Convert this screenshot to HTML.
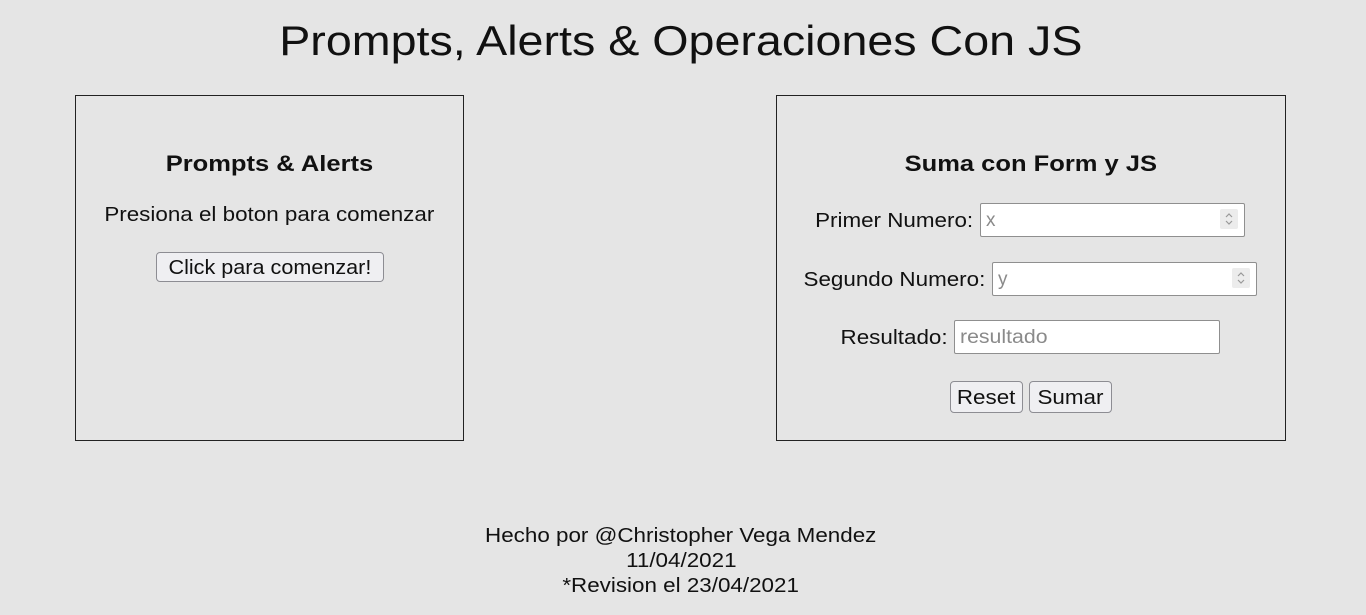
<!DOCTYPE html>
<html><head><meta charset="utf-8"><style>
body{margin:0;width:1366px;height:615px;background:#e5e5e5;font-family:"Liberation Sans",sans-serif;color:#111;position:relative;overflow:hidden}
.a{position:absolute;white-space:nowrap}
.c{text-align:center}
.s{display:inline-block;transform:scaleX(1.12);transform-origin:center}
.r .s{transform-origin:right}
.l .s{transform-origin:left}
.box{position:absolute;border:1px solid #222;box-sizing:border-box}
.btn{position:absolute;background:#efeff2;border:1px solid #8d8d93;border-radius:4px;box-sizing:border-box;font-size:19px;text-align:center;line-height:30px}
.inp{position:absolute;background:#fff;border:1px solid #8f8f8f;border-radius:2px;box-sizing:border-box;font-size:19px;color:#8a8a8a;padding-left:5px;line-height:34px}
.sp{position:absolute;right:6px;top:5px;width:18px;height:20px;background:#ececec;border-radius:2px;line-height:0}
</style></head><body>
<div class="a c" style="left:0;width:1362px;top:16px;font-size:42px;line-height:50px"><span class="s" style="transform:scaleX(1.11)">Prompts, Alerts &amp; Operaciones Con JS</span></div>

<div class="box" style="left:75px;top:95px;width:389px;height:346px"></div>
<div class="a c" style="left:75px;width:389px;top:150px;font-size:22px;font-weight:bold;line-height:28px"><span class="s" style="transform:scaleX(1.16)">Prompts &amp; Alerts</span></div>
<div class="a c" style="left:75px;width:389px;top:203px;font-size:20px;line-height:24px"><span class="s">Presiona el boton para comenzar</span></div>
<div class="btn" style="left:156px;top:252px;width:228px;height:30px;line-height:30px;font-size:20px"><span class="s" style="transform:scaleX(1.08)">Click para comenzar!</span></div>

<div class="box" style="left:776px;top:95px;width:510px;height:346px"></div>
<div class="a c" style="left:776px;width:510px;top:150px;font-size:22px;font-weight:bold;line-height:28px"><span class="s" style="transform:scaleX(1.16)">Suma con Form y JS</span></div>
<div class="a r" style="right:393px;top:209px;font-size:20px;line-height:24px"><span class="s">Primer Numero:</span></div>
<div class="inp" style="left:980px;top:203px;width:265px;height:34px">x<div class="sp"><svg width="18" height="20"><path d="M6 8l3-3 3 3M6 12l3 3 3-3" fill="none" stroke="#999" stroke-width="1.2"/></svg></div></div>
<div class="a r" style="right:381px;top:268px;font-size:20px;line-height:24px"><span class="s">Segundo Numero:</span></div>
<div class="inp" style="left:992px;top:262px;width:265px;height:34px">y<div class="sp"><svg width="18" height="20"><path d="M6 8l3-3 3 3M6 12l3 3 3-3" fill="none" stroke="#999" stroke-width="1.2"/></svg></div></div>
<div class="a r" style="right:418px;top:326px;font-size:20px;line-height:24px"><span class="s">Resultado:</span></div>
<div class="inp" style="left:954px;top:320px;width:266px;height:34px"><span class="s" style="transform-origin:left">resultado</span></div>
<div class="btn" style="left:950px;top:381px;width:73px;height:32px;line-height:32px;font-size:20px"><span class="s">Reset</span></div>
<div class="btn" style="left:1029px;top:381px;width:83px;height:32px;line-height:32px;font-size:20px"><span class="s">Sumar</span></div>

<div class="a c" style="left:0;width:1362px;top:524px;font-size:20px;line-height:25px"><span class="s">Hecho por @Christopher Vega Mendez</span><br><span class="s">11/04/2021</span><br><span class="s">*Revision el 23/04/2021</span></div>
</body></html>
